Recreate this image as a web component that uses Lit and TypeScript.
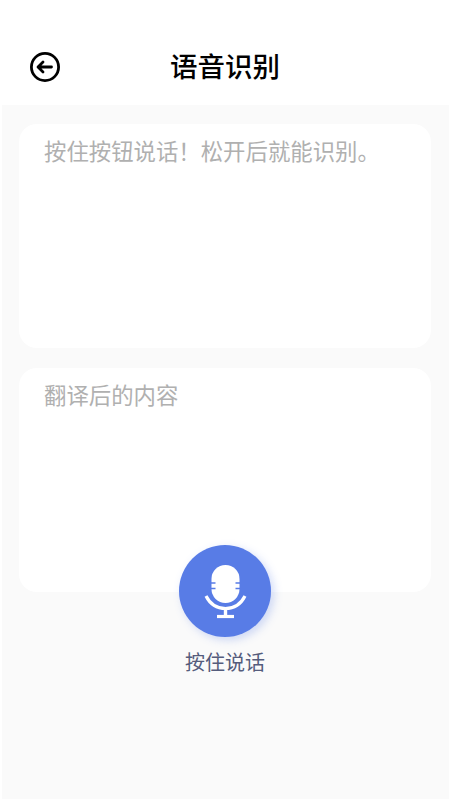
import { LitElement, html, css } from "lit";
import { customElement } from "lit/decorators.js";

@customElement("app-root")
export class AppRoot extends LitElement {
  static styles = css`
    :host {
      display: block;
      width: 450px;
      height: 800px;
      overflow: hidden;
      background: #fff;
      font-family: "Noto Sans CJK SC", "Noto Sans", sans-serif;
    }
    .header {
      height: 105px;
      box-sizing: border-box;
      padding: 44px 30px 0;
      display: grid;
      grid-template-columns: 30px 1fr 30px;
      align-items: start;
      background: #fff;
    }
    .back {
      width: 30px;
      height: 30px;
      display: block;
      margin-top: 8px;
    }
    .title {
      text-align: center;
      font-size: 27.5px;
      line-height: 43px;
      font-weight: 500;
      color: #000;
    }
    .body {
      height: 694px;
      margin: 0 1px 0 2px;
      box-sizing: border-box;
      padding: 19px 18px 0 17px;
      background: #fafafa;
      display: flex;
      flex-direction: column;
      gap: 20px;
    }
    .card {
      height: 224px;
      box-sizing: border-box;
      padding: 8px 25px;
      background: #fff;
      border-radius: 18px;
      font-size: 22.4px;
      line-height: 36px;
      color: #b0b0b0;
    }
    .talk {
      margin-top: -67px;
      display: flex;
      flex-direction: column;
      align-items: center;
      gap: 10px;
      position: relative;
    }
    .mic {
      width: 92px;
      height: 92px;
      border-radius: 50%;
      background: #587ce6;
      box-shadow: 3px 3px 8px rgba(88, 124, 230, 0.28);
    }
    .mic svg {
      width: 92px;
      height: 92px;
      display: block;
    }
    .label {
      font-size: 20px;
      line-height: 30px;
      color: #555c7c;
    }
  `;

  render() {
    return html`
      <div class="header">
        <svg class="back" viewBox="0 0 30 30" fill="none" stroke="#000" stroke-linecap="round" stroke-linejoin="round">
          <circle cx="15" cy="15" r="13.6" stroke-width="2.8"></circle>
          <path d="M21.5 15H8.5M13 10L8 15L13 20" stroke-width="2.8"></path>
        </svg>
        <div class="title">语音识别</div>
        <div></div>
      </div>
      <div class="body">
        <div class="card">按住按钮说话！松开后就能识别。</div>
        <div class="card">翻译后的内容</div>
        <div class="talk">
          <div class="mic">
            <svg viewBox="0 0 92 92">
              <rect x="32.5" y="20" width="28" height="38" rx="14" fill="#fff"></rect>
              <path d="M32 38h4.5M32 43.5h4.5M56.5 38h4.5M56.5 43.5h4.5" stroke="#587ce6" stroke-width="1.3"></path>
              <path d="M27 51C31 59 38 63.5 46.5 63.5S62 59 66 51" fill="none" stroke="#fff" stroke-width="3.2"></path>
              <path d="M46.5 63v8" stroke="#fff" stroke-width="3.4"></path>
              <path d="M38 71.5h17" stroke="#fff" stroke-width="3.2"></path>
            </svg>
          </div>
          <div class="label">按住说话</div>
        </div>
      </div>
    `;
  }
}
